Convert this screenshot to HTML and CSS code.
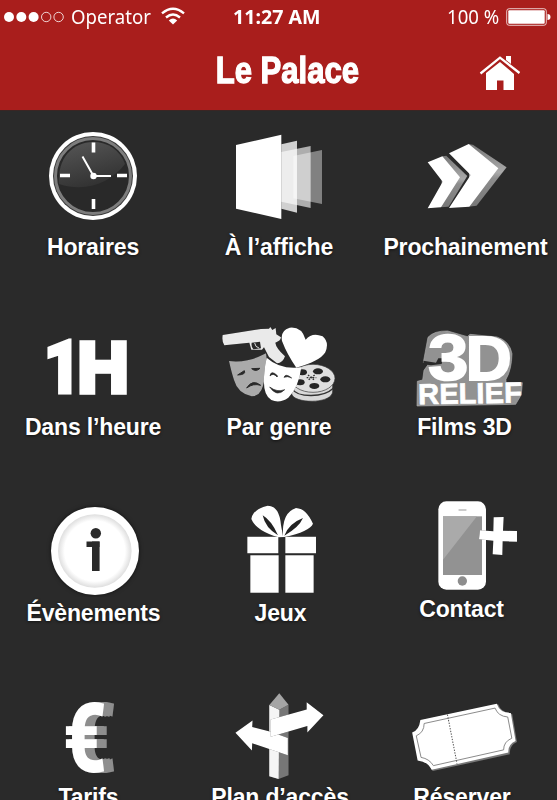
FILE: index.html
```html
<!DOCTYPE html>
<html lang="fr">
<head>
<meta charset="utf-8">
<title>Le Palace</title>
<link rel="stylesheet" href="styles.css">
</head>
<body>
<header class="header">
  <div class="status">
    <div class="status-left">
      <svg width="62" height="14" viewBox="0 0 62 14"><g fill="#fff"><circle cx="6" cy="7" r="5"/><circle cx="18.3" cy="7" r="5"/><circle cx="30.6" cy="7" r="5"/></g><g fill="none" stroke="#fff" stroke-width=".8"><circle cx="43.2" cy="7" r="4.7"/><circle cx="55.6" cy="7" r="4.7"/></g></svg>
      <span class="operator">Operator</span>
      <svg class="wifi" width="24" height="18" viewBox="0 0 24 18"><g fill="none" stroke="#fff" stroke-width="2.4"><path d="M1 6.4Q12-3 23 6.4"/><path d="M5 10.5Q12 4.5 19 10.5"/></g><path d="M7.8 13.5Q12 9.5 16.2 13.5L12 17.5z" fill="#fff"/></svg>
    </div>
    <span class="time">11:27 AM</span>
    <div class="status-right">
      <span class="percent">100 %</span>
      <svg width="45" height="18" viewBox="0 0 45 18"><rect x=".7" y=".7" width="39.6" height="16.6" rx="2.5" fill="none" stroke="#fff" stroke-opacity=".75"/><rect x="2.3" y="2.3" width="36.4" height="13.4" rx="1" fill="#fff"/><path d="M41.5 6Q44.5 6 44.5 9T41.5 12z" fill="#fff"/></svg>
    </div>
  </div>
  <div class="titlebar">
    <h1 class="title">Le Palace</h1>
    <svg class="home" width="42" height="38" viewBox="0 0 42 38"><g fill="#fff"><path d="M27 2h5v8l-5-4z"/><path d="M7 19L21 8l14 12v16H24.500v-9.500h-6.500V36H7z"/></g><path d="M1.500 19.500L21 3.700l19.500 15.300" fill="none" stroke="#fff" stroke-width="2.300"/></svg>
  </div>
</header>
<main class="grid">
  <a class="tile">
    <svg class="icon" viewBox="0 121 186 110">
      <defs><linearGradient id="glare" x1=".2" y1="0" x2=".6" y2="1"><stop offset="0" stop-color="#555"/><stop offset="1" stop-color="#303030"/></linearGradient></defs>
      <circle cx="93" cy="176" r="44" fill="#fff"/><circle cx="93" cy="176" r="40" fill="#3a3a3a"/><circle cx="93" cy="176" r="37.500" fill="#292929" stroke="#7d7d7d" stroke-width="3"/>
      <path d="M59 184C57 158 73 142 93 142c15 0 27 8 32 22-14 18-38 29-66 20z" fill="url(#glare)"/>
      <g stroke="#fff"><path d="M93.500 142.500v10M93.500 199v10M60 175.500h10M117 175.500h10" stroke-width="3.600"/><path d="M93.500 176L82.500 156.500M93.500 176h17.500" stroke-width="2"/></g><circle cx="93.500" cy="176" r="3.200" fill="#fff"/>
    </svg>
    <span class="label">Horaires</span>
  </a>
  <a class="tile">
    <svg class="icon" viewBox="186 121 186 110"><g transform="translate(205 120) scale(.3333)" fill="#fff"><path d="M265 108L351 90V252L265 235z" opacity=".41"/><path d="M229 96L317 78V264L229 245z" opacity=".62"/><path d="M229 73L276 62V278L229 266z" opacity=".78"/><path d="M93 75L229 44V297L93 266z"/></g></svg>
    <span class="label">À l’affiche</span>
  </a>
  <a class="tile">
    <svg class="icon" viewBox="372 121 186 110"><defs><linearGradient id="side" x1="0" y1="0" x2="0" y2="1"><stop offset="0" stop-color="#777"/><stop offset=".45" stop-color="#aaa"/><stop offset=".55" stop-color="#8d8d8d"/><stop offset="1" stop-color="#777"/></linearGradient></defs><g class="shadow" transform="translate(380 120) scale(.3333)"><path d="M187 109L199 107L262 168L206 260L183 262z" fill="url(#side)"/><path d="M143 127L187 109L240 172L183 262L143 265L188 185z" fill="#fff"/></g><g class="shadow" transform="translate(380 120) scale(.3333)"><path d="M266 72L279 74L380 142L290 257L268 260z" fill="url(#side)"/><path d="M207 100L266 72L355 145L268 260L207 264L272 165z" fill="#fff"/></g></svg>
    <span class="label shift-proch">Prochainement</span>
  </a>
  <a class="tile">
    <svg class="icon" viewBox="0 301 186 110"><g class="heavy"><text class="one" transform="translate(43.500 392.500) scale(.87 1)" font-size="75" stroke-width="3">1</text><text x="77.500" y="391.500" font-size="71" stroke-width="5.500">H</text></g></svg>
    <span class="label">Dans l’heure</span>
  </a>
  <a class="tile">
    <svg class="icon" viewBox="186 301 186 110"><g transform="translate(205 315) scale(.3333)">
      <g stroke="#333" stroke-width="2"><path d="M260 211v24c0 31 125 35 123-8v-35z" fill="#d8d8d8"/><path d="M262 222c15 25 92 28 123-2" fill="none" stroke-width="4"/><ellipse cx="324" cy="190" rx="66" ry="42" fill="#dfdfdf"/></g>
      <g fill="#252525"><ellipse cx="292" cy="172" rx="14" ry="9"/><ellipse cx="339" cy="169" rx="15" ry="9"/><ellipse cx="361" cy="193" rx="15" ry="9"/><ellipse cx="328" cy="213" rx="15" ry="9"/><ellipse cx="285" cy="202" rx="14" ry="9"/></g><path d="M309 180l20 16M329 180l-20 16M305 188h29" stroke="#333" stroke-width="4" stroke-dasharray="5 4"/>
      <path class="shadow" d="M72 138Q127 145 183 115Q190 151 174 213Q166 243 140 244Q98 235 87 195Q80 174 72 138z" fill="#aaa"/>
      <path d="M98 180l20-13q6 12-20 13M140 161l25-1q-12 12-25 1M125 219q18-28 42-8q-22-7-42 8" fill="#292929" stroke="#292929" stroke-width="3"/>
      <path class="shadow" d="M53 60L168 42L192 41L196 36L202 45L212 39L214 58L228 67Q227 78 211 83Q213 99 240 124Q234 144 216 145L192 126L177 97L171 104H139L133 83L58 91Q50 80 53 60z" fill="#eaeaea"/><path d="M140 83l25-3 3 20-23 3q-7-7-5-20" fill="#292929"/><path d="M149 84l4 10 9 5" stroke="#ddd" stroke-width="3" fill="none"/>
      <path class="shadow" d="M185 128Q226 165 289 157Q281 218 250 248Q224 266 199 255Q171 240 178 174Q180 148 185 128z" fill="#fff"/>
      <path d="M195 183q3-20 23 0l-2 3q-11-14-21-3M237 187q5-13 23 2-13-7-23-2M194 216q22 17 45 8-23 24-45-8" fill="#292929" stroke="#292929" stroke-width="2"/>
      <path class="shadow" d="M274 158Q246 118 231 78Q225 46 254 38Q290 34 302 74Q321 51 353 64Q374 82 361 112Q345 139 274 158z" fill="#fff"/>
    </g></svg>
    <span class="label">Par genre</span>
  </a>
  <a class="tile">
    <svg class="icon" viewBox="372 301 186 110"><g transform="translate(395 315) scale(.3333)">
      <path d="M99 67Q117 47 158 48L217 65L225 58L306 66Q344 78 351 116Q350 164 333 193V203L382 203L379 239L362 268L66 273L67 199L83 195L87 166L100 148L85 142z" fill="#929292" stroke="#aaa" stroke-width="2"/>
      <path d="M85 137l38 6 7-13 13 0-3 17-32 4-22-3z" fill="#292929"/>
      <g class="relief"><text transform="translate(99 194) scale(1.120 1)" font-size="195" stroke-width="5">3</text><text transform="translate(212 194) scale(1.020 1)" font-size="187" stroke-width="6">D</text><text transform="translate(70 268) rotate(-1)" font-size="87" textLength="311" lengthAdjust="spacingAndGlyphs" stroke-width="2">RELIEF</text></g>
    </g></svg>
    <span class="label shift-films">Films 3D</span>
  </a>
  <a class="tile">
    <svg class="icon" viewBox="0 487 186 110"><defs><radialGradient id="disc"><stop offset=".82" stop-color="#fff"/><stop offset="1" stop-color="#dedede"/></radialGradient></defs><circle class="shadow" cx="95" cy="551" r="44" fill="#fff"/><circle cx="94.800" cy="551" r="36.800" fill="url(#disc)"/><g fill="#2a2a2a"><circle cx="95.800" cy="533.300" r="5.200"/><rect x="86.500" y="541.500" width="13" height="5.500"/><rect x="92" y="541.500" width="7.600" height="29.500"/></g></svg>
    <span class="label shift-events">Évènements</span>
  </a>
  <a class="tile">
    <svg class="icon" viewBox="186 487 186 110"><g class="shadow" transform="translate(205 490) scale(.3333)" fill="#fff"><path d="M127 140h93v50h-93zM241 140h92v50h-92zM136 196h85v112h-85zM241 196h85v112h-85z"/><path d="M221 142Q154 123 139 87Q143 58 188 47Q223 47 228 105L234 139Q230 67 273 54Q303 55 324 101Q314 125 238 141z"/><path d="M219 136Q181 114 173 76Q200 92 219 136zM238 137Q252 100 294 84Q282 112 238 137z" fill="#222"/></g></svg>
    <span class="label shift-jeux">Jeux</span>
  </a>
  <a class="tile">
    <svg class="icon" viewBox="372 487 186 110"><g transform="translate(400 490) scale(.3333)"><rect class="shadow" x="115" y="34" width="143" height="265" rx="24" fill="#fff"/><rect x="129" y="79" width="117" height="176" fill="#929292"/><path d="M129 79h102L129 209z" fill="#aaa"/><rect x="175" y="57" width="25" height="6" rx="3" fill="#ccc"/><circle cx="187" cy="273" r="14" fill="#8d8d8d"/><path class="shadow" d="M281 82L311 81L309 122L351 123V155L308 154L307 195L278 193L280 152L237 148L240 121L280 124z" fill="#fff"/></g></svg>
    <span class="label shift-contact">Contact</span>
  </a>
  <a class="tile">
    <svg class="icon" viewBox="0 671 186 110"><g class="euro"><text transform="translate(63.500 771) scale(.79 1)">€</text></g></svg>
    <span class="label shift-tarifs">Tarifs</span>
  </a>
  <a class="tile">
    <svg class="icon" viewBox="186 671 186 110"><g transform="translate(20 680) scale(.3425)"><path d="M728 73L757 87L784 72V278L755 289L728 281z" fill="#777"/><path d="M728 73L757 87L755 289L728 281z" fill="#f5f5f5"/><path d="M757 39L784 72L757 87L728 73z" fill="#a5a5a5"/><path class="shadow" d="M629 154L679 118L678 137L732 151L782 169V220L678 185L677 206z" fill="#fff"/><path class="shadow" d="M732 115L837 86V65L886 103L839 153V134L732 166z" fill="#fff"/></g></svg>
    <span class="label shift-plan">Plan d’accès</span>
  </a>
  <a class="tile">
    <svg class="icon" viewBox="372 671 186 110"><g transform="translate(20 680) scale(.3425)"><path d="M1170 118L1396 71Q1405 96 1437 99L1451 181Q1428 191 1430 217L1205 266L1195 250z" fill="#777"/><path d="M1169 117L1392 69Q1401 96 1433 96L1447 178Q1424 188 1426 212L1202 262Q1190 238 1161 235L1145 153Q1165 148 1169 117z" fill="#fff"/><path d="M1180 127L1387 82Q1396 106 1424 108L1436 170Q1412 180 1412 204L1207 250Q1195 230 1171 226L1157 163Q1180 153 1180 127z" fill="none" stroke="#777" stroke-width="2.500"/><path d="M1248 101L1276 244" stroke="#555" stroke-width="3" stroke-dasharray="4 4"/></g></svg>
    <span class="label shift-reserve">Réserver</span>
  </a>
</main>
</body>
</html>
```
FILE: styles.css
```css
* { box-sizing: border-box; }
html, body { margin: 0; height: 800px; overflow: hidden; }
body { width: 557px; background: #2a2a2a; color: #fff; font-family: "Liberation Sans", Arial, sans-serif; }
svg { display: block; flex: none; }
.header { height: 111px; background: #a91e1c; border-bottom: 1px solid #3a2523; }
.status { display: grid; grid-template-columns: 1fr 92px 1fr; align-items: center; height: 34px; font-family: "Noto Sans", "Open Sans", sans-serif; font-size: 20px; line-height: 34px; white-space: nowrap; }
.status-left { display: flex; align-items: center; padding-left: 3px; }
.operator { width: 80px; margin-left: 6px; transform: scaleX(.93); transform-origin: left; }
.wifi { margin-left: 10px; margin-top: -2px; }
.time { font-weight: 700; transform: scaleX(.98); transform-origin: left; }
.status-right { display: flex; align-items: center; justify-content: flex-end; padding-right: 6px; }
.percent { width: 53px; margin-right: 6px; transform: scaleX(.93); transform-origin: left; }
.titlebar { display: grid; grid-template-columns: 1fr auto 1fr; align-items: center; height: 76px; }
.title { grid-column: 2; margin: 0 0 2px 17px; font-size: 37px; line-height: 48px; transform: scaleX(.84); -webkit-text-stroke: 1.3px #fff; }
.home { justify-self: end; margin: 2px 36px 0 0; }
.grid { display: grid; grid-template-columns: 186px 186px 186px; grid-template-rows: 180px 186px 184px 142px; padding-top: 10px; }
.tile { display: flex; flex-direction: column; align-items: center; }
.icon { width: 186px; height: 110px; }
.label { font-size: 23px; font-weight: 700; line-height: 32px; letter-spacing: -.15px; white-space: nowrap; text-shadow: 0 1px 3px #0009; }
.shadow { filter: drop-shadow(0 0 2px #0009); }
.heavy { fill: #fff; stroke: #fff; font-weight: 700; }
.one { font-family: Roboto, sans-serif; font-weight: 900; }
.relief { fill: #fff; stroke: #fff; font-weight: 700; }
.euro { font-family: Roboto, sans-serif; font-size: 94px; font-weight: 700; fill: #fff; stroke: #fff; stroke-width: 2px; filter: drop-shadow(3px 0 0 #8e8e8e) drop-shadow(3px 0 0 #8e8e8e) drop-shadow(4px 0 0 #8e8e8e); }
.shift-proch { margin-left: 1px; }
.shift-films { margin-left: -1px; }
.shift-events { margin-left: 1px; }
.shift-jeux { margin-left: 3px; }
.shift-contact { margin: -4px 0 0 -7px; }
.shift-tarifs { margin-left: -9px; }
.shift-plan { margin-left: 2px; }
.shift-reserve { margin-left: -6px; }
```
